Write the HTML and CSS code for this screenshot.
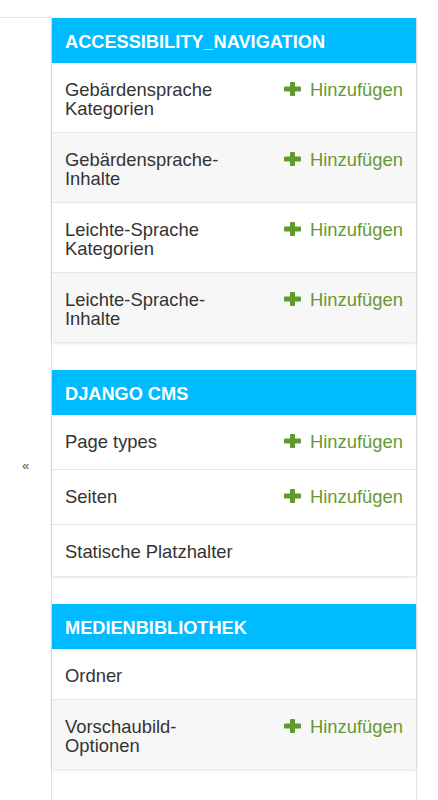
FILE: index.html
```html
<!DOCTYPE html>
<html lang="de">
<head>
<meta charset="utf-8">
<title>Admin</title>
<link rel="stylesheet" href="styles.css">
</head>
<body>
<div class="main">
  <button class="toggle" type="button" aria-label="Seitenleiste umschalten">«</button>
  <nav class="sidebar">
    <section class="module">
      <h2 class="caption">ACCESSIBILITY_NAVIGATION</h2>
      <div class="row">
        <span class="name">Gebärdensprache Kategorien</span>
        <a class="addlink" href="#"><svg class="plus" width="17" height="14" viewBox="0 0 17 14"><rect x="0" y="4.5" width="17" height="5" rx="1"/><rect x="6" y="0" width="5" height="14" rx="1"/></svg>Hinzufügen</a>
      </div>
      <div class="row alt">
        <span class="name">Gebärdensprache-Inhalte</span>
        <a class="addlink" href="#"><svg class="plus" width="17" height="14" viewBox="0 0 17 14"><rect x="0" y="4.5" width="17" height="5" rx="1"/><rect x="6" y="0" width="5" height="14" rx="1"/></svg>Hinzufügen</a>
      </div>
      <div class="row">
        <span class="name">Leichte-Sprache Kategorien</span>
        <a class="addlink" href="#"><svg class="plus" width="17" height="14" viewBox="0 0 17 14"><rect x="0" y="4.5" width="17" height="5" rx="1"/><rect x="6" y="0" width="5" height="14" rx="1"/></svg>Hinzufügen</a>
      </div>
      <div class="row alt last">
        <span class="name">Leichte-Sprache-Inhalte</span>
        <a class="addlink" href="#"><svg class="plus" width="17" height="14" viewBox="0 0 17 14"><rect x="0" y="4.5" width="17" height="5" rx="1"/><rect x="6" y="0" width="5" height="14" rx="1"/></svg>Hinzufügen</a>
      </div>
    </section>
    <section class="module">
      <h2 class="caption">DJANGO CMS</h2>
      <div class="row">
        <span class="name">Page types</span>
        <a class="addlink" href="#"><svg class="plus" width="17" height="14" viewBox="0 0 17 14"><rect x="0" y="4.5" width="17" height="5" rx="1"/><rect x="6" y="0" width="5" height="14" rx="1"/></svg>Hinzufügen</a>
      </div>
      <div class="row">
        <span class="name">Seiten</span>
        <a class="addlink" href="#"><svg class="plus" width="17" height="14" viewBox="0 0 17 14"><rect x="0" y="4.5" width="17" height="5" rx="1"/><rect x="6" y="0" width="5" height="14" rx="1"/></svg>Hinzufügen</a>
      </div>
      <div class="row last">
        <span class="name">Statische Platzhalter</span>
      </div>
    </section>
    <section class="module">
      <h2 class="caption">MEDIENBIBLIOTHEK</h2>
      <div class="row">
        <span class="name">Ordner</span>
      </div>
      <div class="row alt last">
        <span class="name">Vorschaubild-Optionen</span>
        <a class="addlink" href="#"><svg class="plus" width="17" height="14" viewBox="0 0 17 14"><rect x="0" y="4.5" width="17" height="5" rx="1"/><rect x="6" y="0" width="5" height="14" rx="1"/></svg>Hinzufügen</a>
      </div>
    </section>
  </nav>
</div>
</body>
</html>
```
FILE: styles.css
```css
html, body {
  margin: 0;
  padding: 0;
  background: #fff;
}

body {
  font-family: "Liberation Sans", Arial, Helvetica, sans-serif;
  color: #333;
}

.main {
  display: flex;
  align-items: stretch;
  padding-top: 17px;
  min-height: 896px;
  width: 418px;
}

.toggle {
  flex: 0 0 52px;
  width: 52px;
  margin: 0;
  padding: 0;
  border: 0;
  border-top: 1px solid #e4e4e4;
  border-right: 1px solid #e0e0e0;
  background: #fff;
  display: flex;
  align-items: center;
  justify-content: center;
  font-family: "Liberation Sans", Arial, sans-serif;
  font-size: 13px;
  color: #555;
  cursor: pointer;
}

.sidebar {
  flex: 0 0 364px;
  width: 364px;
  padding-top: 1px;
  border-right: 1px solid #e6e6e6;
  background: #fff;
}

.module {
  margin-bottom: 28px;
  background: #fff;
  box-shadow: 0 1px 3px rgba(0, 0, 0, 0.14);
}

.caption {
  margin: 0;
  padding: 15px 13px 12px;
  background: #00bbff;
  color: #fff;
  font-size: 18.2px;
  line-height: 18px;
  font-weight: bold;
}

.row {
  display: flex;
  align-items: flex-start;
  justify-content: space-between;
  padding: 18px 13px 14px;
  border-bottom: 1px solid #e6e6e6;
  background: #fff;
  font-size: 18.4px;
  line-height: 18.5px;
}

.row.alt {
  background: #f7f7f7;
}

.row.last {
  border-bottom: 0;
}

.name {
  max-width: 178px;
  color: #333;
}

.addlink {
  padding-bottom: 3.5px;
  color: #669933;
  text-decoration: none;
  white-space: nowrap;
}

.plus {
  fill: #5f9a2f;
  margin-right: 9px;
  vertical-align: baseline;
}
```
